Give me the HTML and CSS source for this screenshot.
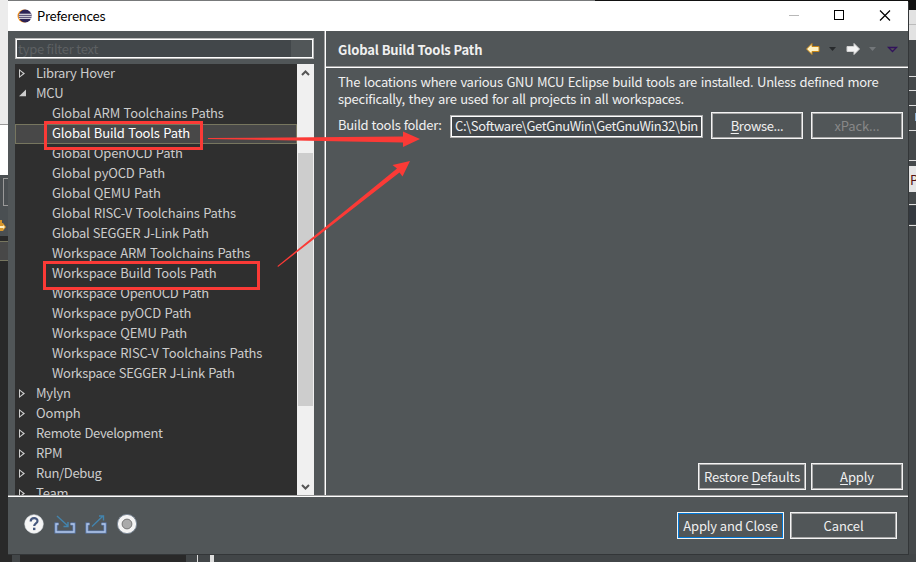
FILE: index.html
```html
<!DOCTYPE html>
<html lang="en">
<head>
<meta charset="utf-8">
<title>Preferences</title>
<link rel="stylesheet" href="styles.css">
</head>
<body>
<div class="desktop">
<svg class="backdrop" width="916" height="562" shape-rendering="crispEdges">
  <rect width="916" height="562" fill="#2e2e2e"/>
  <rect width="595" height="2" fill="#77797a"/>
  <rect x="595" width="321" height="12" fill="#111"/>
  <rect width="8" height="125" fill="#ececec"/>
  <rect y="125" width="8" height="50" fill="#fff"/><rect y="124" width="8" height="1" fill="#999"/>
  <rect y="175" width="8" height="61" fill="#4a4f52"/>
  <path d="M8 178.500H3.500V205H8" fill="none" stroke="#999"/>
  <rect y="236" width="8" height="326" fill="#292929"/>
  <rect y="241" width="8" height="20" fill="#484848"/><path d="M0 241.500h8M0 260.500h8" stroke="#77765f"/>
  <g shape-rendering="auto"><path d="M0 220h2v3h1l3 4-3 4H0" fill="#d6952b"/><path d="M0 226h3v-1l2 2-2 2v-1H0z" fill="#fff0c0"/></g>
  <rect x="909" y="10" width="7" height="30" fill="#e2e2e2"/><rect x="909" y="24" width="7" height="1" fill="#bbb"/>
  <rect x="908" y="40" width="8" height="522" fill="#45494b"/>
  <path d="M908 76.500h8M908 90.500h8M908 105.500h8M908 130.500h8M908 160.500h8M908 204.500h8M908 225.500h8" stroke="#ddd"/>
  <rect x="908" y="166" width="8" height="26" fill="#e5e5e5"/>
  <rect x="908" y="206" width="8" height="18" fill="#34393f"/>
  <path d="M916 113.500h-1v7h1" fill="none" stroke="#8fb0d0"/>
  <rect x="8" y="554" width="908" height="8" fill="#424648"/>
  <rect x="20" y="554" width="166" height="8" fill="#292929"/>
  <rect x="0" y="554" width="12" height="8" fill="#292929"/>
  <rect x="197" y="554" width="1" height="8" fill="#ddd"/><rect x="210" y="554" width="4" height="8" fill="#ddd"/>
  <path d="M908.500 2v552.500H8" fill="none" stroke="#333638"/>
</svg>
<span class="peek">P</span>
<div class="dialog">
  <header class="titlebar">
    <svg class="logo" width="16" height="16" viewBox="0 0 16 16"><circle cx="7" cy="8" r="6.500" fill="#f7941e"/><circle cx="8.200" cy="8" r="6.500" fill="#2c2255"/><path d="M2 6.200h12.500M1.800 8.200h13M2 10.200h12.500" stroke="#fff" stroke-width="1.100"/></svg>
    <span class="caption">Preferences</span>
    <svg class="winbtns" width="110" height="15" viewBox="0 0 110 15" fill="none" stroke="#000" shape-rendering="crispEdges"><path d="M4 7.500h10" stroke="#b8b8b8"/><rect x="49.500" y="2.500" width="9" height="9"/><path d="M95 2.500l10 10M105 2.500l-10 10" shape-rendering="auto" stroke-width="1.200"/></svg>
  </header>
  <main class="content">
    <section class="nav">
      <div class="filter">type filter text</div>
      <div class="treebox">
        <ul class="tree">
          <li class="top closed narrow">Library Hover</li>
          <li class="top open">MCU</li>
          <li>Global ARM Toolchains Paths</li>
          <li class="selected">Global Build Tools Path</li>
          <li>Global OpenOCD Path</li>
          <li>Global pyOCD Path</li>
          <li>Global QEMU Path</li>
          <li>Global RISC-V Toolchains Paths</li>
          <li class="narrow">Global SEGGER J-Link Path</li>
          <li>Workspace ARM Toolchains Paths</li>
          <li>Workspace Build Tools Path</li>
          <li>Workspace OpenOCD Path</li>
          <li>Workspace pyOCD Path</li>
          <li>Workspace QEMU Path</li>
          <li>Workspace RISC-V Toolchains Paths</li>
          <li class="narrow">Workspace SEGGER J-Link Path</li>
          <li class="top closed">Mylyn</li>
          <li class="top closed">Oomph</li>
          <li class="top closed narrow">Remote Development</li>
          <li class="top closed">RPM</li>
          <li class="top closed narrow">Run/Debug</li>
          <li class="top closed">Team</li>
        </ul>
        <div class="scroll">
          <svg width="17" height="17" fill="none" stroke="#555" stroke-width="2"><path d="M5 11l3.500-3.500L12 11"/></svg>
          <div class="thumb"></div>
          <svg width="17" height="17" fill="none" stroke="#555" stroke-width="2"><path d="M5 7l3.500 3.500L12 7"/></svg>
        </div>
      </div>
    </section>
    <section class="page">
      <div class="pagehead">
        <h1>Global Build Tools Path</h1>
        <svg width="94" height="16" viewBox="0 0 94 16">
          <path d="M1.500 8l5.500-5.500v3h7v5H7v3z" fill="#fff3c4" stroke="#c88717"/>
          <path d="M24 6h7l-3.500 4z" fill="#272a2c"/>
          <path d="M54.500 8L49 2.500v3h-7v5h7v3z" fill="#f4f4f4" stroke="#d2d2d2"/>
          <path d="M64 6h7l-3.500 4z" fill="#73777a"/>
          <path d="M83.500 6.500h8l-4 4z" fill="#555" stroke="#32135c" stroke-width="1.300"/>
        </svg>
      </div>
      <div class="pagebody">
        <p class="desc">The locations where various GNU MCU Eclipse build tools are installed. Unless defined more<br>specifically, they are used for all projects in all workspaces.</p>
        <div class="row">
          <span class="label">Build tools folder:</span>
          <span class="field">C:\Software\GetGnuWin\GetGnuWin32\bin</span>
          <button class="w92 browse"><u>B</u>rowse...</button>
          <button class="w92 off">xPack...</button>
        </div>
        <div class="row end">
          <button class="w108">Restore <u>D</u>efaults</button>
          <button class="w92"><u>A</u>pply</button>
        </div>
      </div>
    </section>
  </main>
  <footer class="footer">
    <svg width="118" height="24" viewBox="0 0 118 24">
      <circle cx="10" cy="12" r="9.300" fill="#f5f5f5" stroke="#dde2e8" stroke-width=".6"/><path d="M6.700 9.500c0-4.300 6.800-4.300 6.800-.5 0 2.500-3.300 2.300-3.300 5" fill="none" stroke="#46587e" stroke-width="2.200"/><rect x="9" y="15.700" width="2.400" height="2.400" fill="#46587e"/>
      <g fill="none"><path d="M34.500 12H32v8h18v-8h-3.500" stroke="#5c7fb9" stroke-width="3"/><path d="M34.500 12H32v8h18v-8h-3.500" stroke="#b4c7e6" stroke-width="1.300"/><path d="M33 4l11 10M44 10v4.500h-4.500" stroke="#4384ad" stroke-width="1.400"/></g>
      <g fill="none"><path d="M65.500 12H63v8h18v-8h-3.500" stroke="#5c7fb9" stroke-width="3"/><path d="M65.500 12H63v8h18v-8h-3.500" stroke="#b4c7e6" stroke-width="1.300"/><path d="M68 14.500L79 4M75 4h4.500v4.500" stroke="#4384ad" stroke-width="1.400"/></g>
      <circle cx="103" cy="12" r="9.600" fill="#f4f4f4" stroke="#7b8795"/><circle cx="103" cy="12" r="4.900" fill="#aaa" stroke="#777"/>
    </svg>
    <div class="actions"><button class="primary">Apply and Close</button><button class="w107">Cancel</button></div>
  </footer>
</div>
<svg class="marks" width="916" height="562" fill="none" stroke="#fb3a36" stroke-width="3">
  <rect x="45.500" y="122.500" width="156" height="26"/>
  <rect x="44.500" y="262.500" width="214" height="26"/>
  <path d="M208 138L403 136.500V131.500L420 139 403 147V142.500L208 139z" fill="#fb3a36" stroke="none"/>
  <path d="M277.500 266L397 168.500 392.500 165 410 161 402.500 176.500 399.500 172.500 278 267z" fill="#fb3a36" stroke="none"/>
</svg>
</div>
</body>
</html>
```
FILE: styles.css
```css
* { box-sizing: border-box; }
body { margin: 0; overflow: hidden; font: 13px/20px "Noto Sans CJK SC", "Noto Sans", sans-serif; color: #f0f0f0; }
.desktop { position: relative; width: 916px; height: 562px; overflow: hidden; }
.backdrop, .marks { position: absolute; left: 0; top: 0; }
.peek { position: absolute; left: 910px; top: 170px; color: #511; }
.dialog { position: absolute; left: 8px; top: 1px; width: 900px; height: 553px; background: #515658; display: flex; flex-direction: column; }
.titlebar { height: 30px; background: #fff; color: #000; display: flex; align-items: center; padding-left: 9px; }
.caption { margin: -1px 0 0 4px; flex: 1; letter-spacing: -.27px; }
.winbtns { margin-right: 13px; margin-top: -1px; }
.content { height: 464px; display: flex; }
.nav { width: 316px; padding: 7px 0 0 7px; }
.filter { width: 299px; height: 21px; border: 1px solid #b9b9b9; box-shadow: inset 0 0 0 1px #fff; background: linear-gradient(90deg, #42474a 275px, #515658 275px); color: #5d6062; padding-left: 2px; line-height: 19px; letter-spacing: -.25px; }
.treebox { display: flex; margin-top: 5px; height: 431px; width: 299px; overflow: hidden; }
.tree { list-style: none; margin: 0; padding: 0; width: 282px; background: #2f2f2f; color: #ccc; letter-spacing: -.19px; word-spacing: .9px; }
.tree li { height: 20px; line-height: 18px; padding-left: 37px; white-space: nowrap; }
.tree .top { padding-left: 0; padding-bottom: 2px; display: flex; align-items: center; }
.tree .narrow { letter-spacing: -.33px; }
.top::before { content: ""; width: 6px; height: 9px; margin: 1px 11px 0 4px; }
.closed::before { background: #ccc; clip-path: polygon(0 0, 100% 50%, 0 100%, 0 0, 1px 2px, 1px 7px, 4px 50%, 1px 2px); }
.tree .open::before { width: 7px; margin-right: 10px; background: #ccc; clip-path: polygon(100% 5%, 100% 80%, 0 80%); }
.tree .selected { background: #484848; box-shadow: inset 0 0 0 1px #77765f; color: #fff; }
.scroll { width: 17px; background: #f0f0f0; display: flex; flex-direction: column; justify-content: space-between; }
.thumb { height: 253px; margin: 72px 1px auto; background: #cdcdcd; }
.page { flex: 1; border-left: 1px solid #fff; box-shadow: -1px 0 #a0a0a0; margin-left: 1px; display: flex; flex-direction: column; }
.pagehead { height: 37px; border-bottom: 1px solid #fff; box-shadow: inset 0 -1px #a0a0a0; display: flex; align-items: center; justify-content: space-between; padding: 0 9px 0 12px; }
h1 { font-size: 13px; margin: 2px 0 0; letter-spacing: -.12px; }
.pagebody { flex: 1; display: flex; flex-direction: column; padding: 5px 5px 5px 12px; }
.desc { margin: 0; line-height: 17px; white-space: nowrap; letter-spacing: -.27px; word-spacing: 1px; }
.row { display: flex; align-items: center; height: 27px; margin-top: 5px; }
.label { width: 112px; white-space: nowrap; letter-spacing: -.28px; word-spacing: .6px; margin-top: -1px; }
.field { width: 253px; height: 23px; border: 1px solid #b0b0b0; box-shadow: inset 0 0 0 1px #fff; background: #42474b; line-height: 20px; padding-left: 4px; margin: 1px 8px 0 0; white-space: nowrap; letter-spacing: -.4px; }
button { font: inherit; color: inherit; background: #515658; border: 1px solid #f4f4f4; box-shadow: inset 0 0 0 1px #aaa; height: 27px; padding: 0; white-space: nowrap; line-height: 20px; letter-spacing: -.15px; }
u { text-underline-offset: 2px; }
.w92 { width: 92px; }
.w107 { width: 107px; }
.w108 { width: 108px; }
.browse { letter-spacing: -.35px; }
.w92.off { margin-left: 8px; color: #888; }
.end { margin-top: auto; justify-content: flex-end; gap: 5px; }
.footer { flex: 1; border-top: 1px solid #a0a0a0; box-shadow: inset 0 1px #fff; display: flex; justify-content: space-between; padding: 16px 11px 0 16px; }
.actions { display: flex; gap: 6px; }
.primary { width: 107px; box-shadow: inset 0 0 0 1px #0078d7; }
```
